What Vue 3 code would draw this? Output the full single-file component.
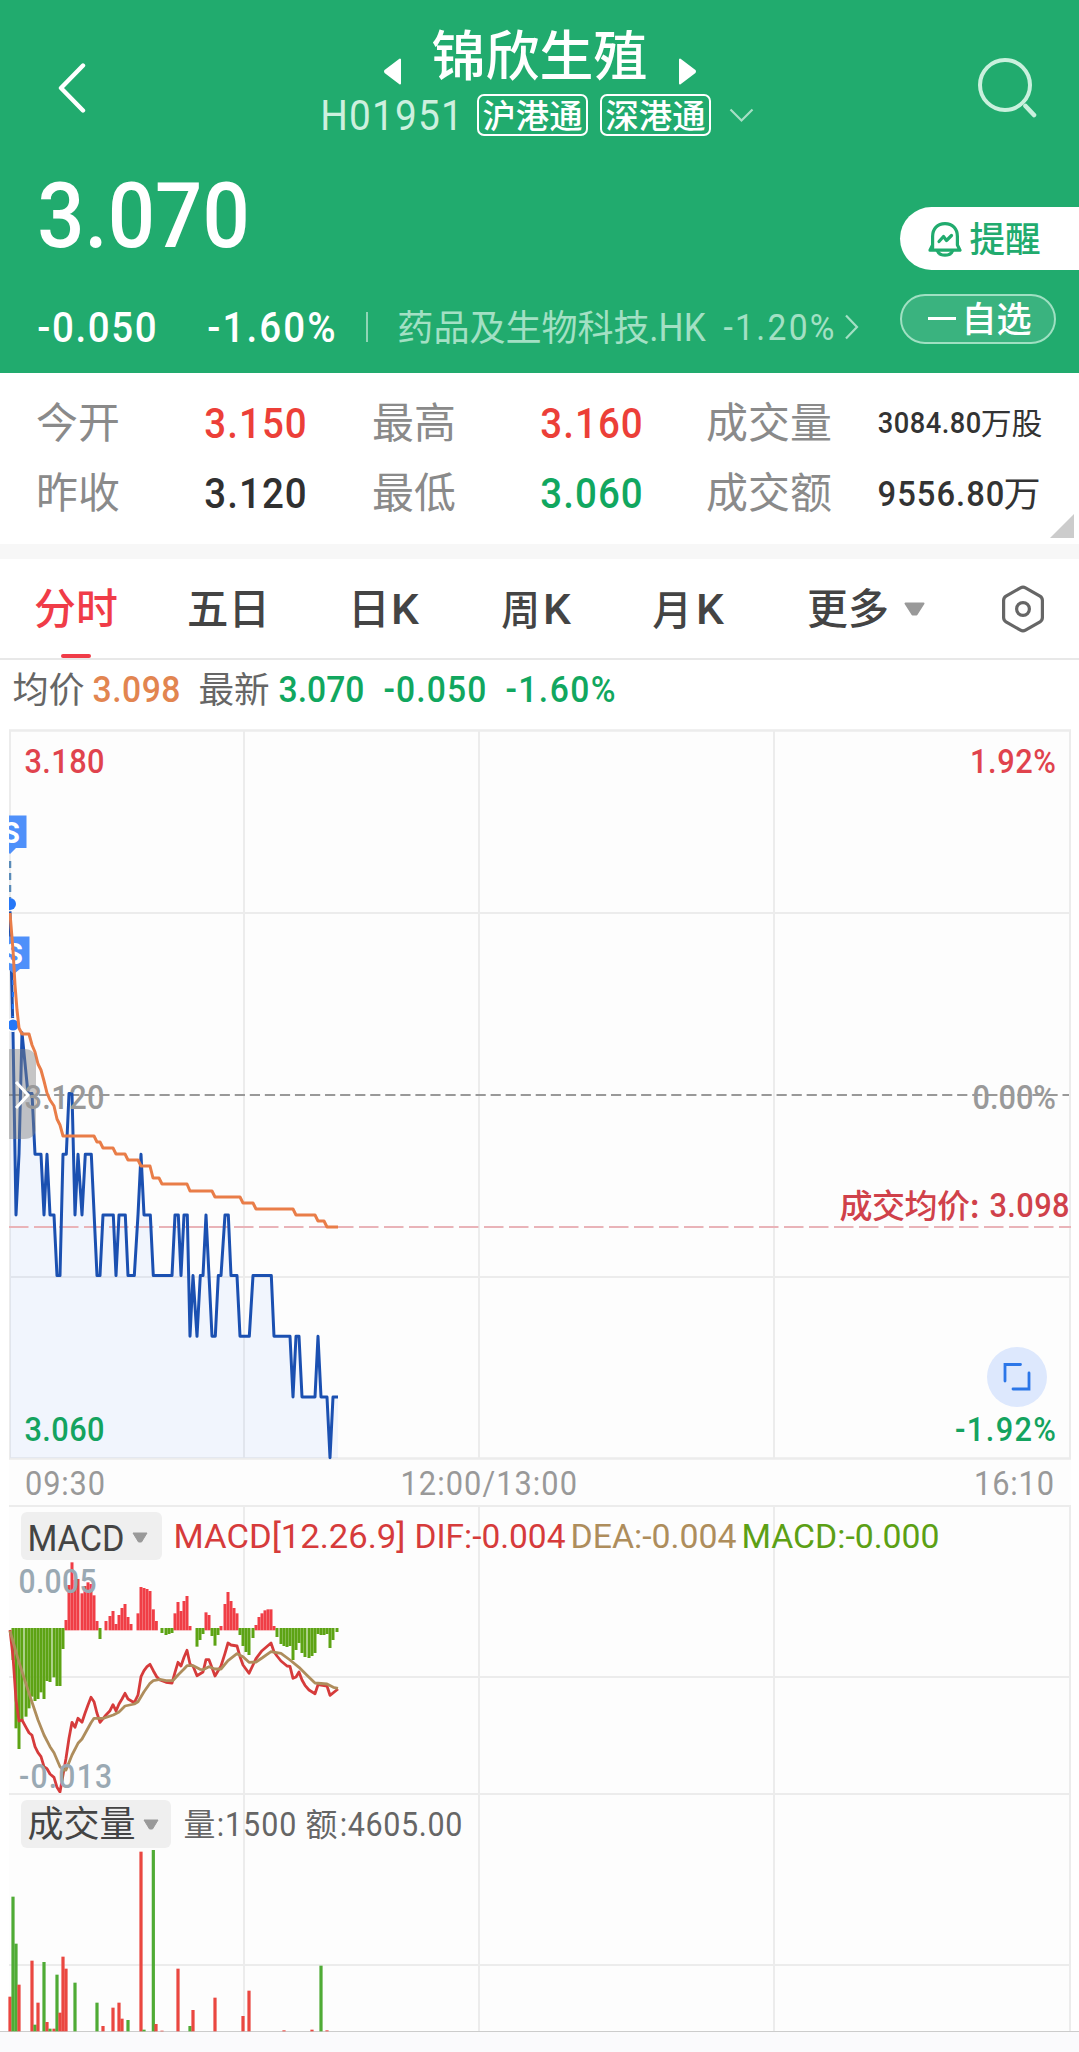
<script setup>
import { h } from 'vue'

const LATIN = 'Roboto, "Noto Sans CJK SC", sans-serif'
const CJK = '"Noto Sans CJK SC", Roboto, sans-serif'
const NARROW = 0.91

// Text set to a fixed width; the box hugs the glyphs so rows can centre it.
// Figures are drawn slightly condensed with the spare width as tracking.
const Fit = (props) => {
  const s = Number(props.s)
  const w = Number(props.w)
  const cjk = /[\u4e00-\u9fff]/.test(props.t)
  const k = /^[H\d.:%+-]+$/.test(props.t) ? NARROW : 1
  const height = cjk ? s * 0.92 : s * 0.711
  const base = cjk ? s * 0.845 : height
  return h('svg', { width: w, height, style: 'overflow:visible;flex:none;display:block' }, [
    h('text', {
      transform: `translate(${-0.045 * s * k} ${base}) scale(${k} 1)`,
      textLength: (w + 0.09 * s * k) / k,
      lengthAdjust: k === 1 ? 'spacingAndGlyphs' : 'spacing',
      fill: 'currentColor',
      'font-size': s,
      'font-weight': props.b || 400,
      'font-family': cjk ? CJK : LATIN
    }, props.t)
  ])
}
Fit.props = ['t', 'w', 's', 'b']

// Same treatment for labels that live inside a chart.
const Num = (props) => h('text', {
  transform: `translate(${props.x} ${props.y}) scale(${NARROW} 1)`,
  textLength: props.w / NARROW,
  lengthAdjust: 'spacing',
  fill: props.c,
  'font-size': props.s || 33.8,
  'font-weight': props.b || 500,
  'font-family': LATIN
}, props.t)
Num.props = ['t', 'x', 'y', 'w', 'c', 's', 'b']

const stats = [
  [
    { l: '今开', v: '3.150', c: 'up' },
    { l: '最高', v: '3.160', c: 'up' },
    { l: '成交量', v: '3084.80', u: '万股' }
  ],
  [
    { l: '昨收', v: '3.120', c: 'flat' },
    { l: '最低', v: '3.060', c: 'down' },
    { l: '成交额', v: '9556.80', u: '万' }
  ]
]

// Samples are [x * 3, value]; x is divided back to page pixels.
const priceRaw = [
  30, 3.15, 39, 3.13, 48, 3.10, 57, 3.11, 66, 3.13, 84, 3.12, 96, 3.12, 105, 3.11, 123, 3.11, 132, 3.10,
  141, 3.11, 150, 3.10, 162, 3.10, 171, 3.09, 180, 3.09, 189, 3.11, 199, 3.11, 207, 3.12, 216, 3.12,
  225, 3.10, 234, 3.11, 246, 3.10, 256, 3.11, 274, 3.11, 291, 3.09, 300, 3.09, 309, 3.10, 340, 3.10,
  348, 3.09, 357, 3.10, 376, 3.10, 384, 3.09, 403, 3.09, 414, 3.10, 423, 3.11, 432, 3.10, 451, 3.10,
  460, 3.09, 516, 3.09, 525, 3.10, 535, 3.10, 543, 3.09, 552, 3.10, 562, 3.10, 570, 3.08, 579, 3.09,
  591, 3.08, 601, 3.09, 609, 3.09, 618, 3.10, 636, 3.08, 646, 3.08, 655, 3.09, 663, 3.09, 675, 3.10,
  685, 3.10, 693, 3.09, 711, 3.09, 720, 3.08, 748, 3.08, 759, 3.09, 814, 3.09, 822, 3.08, 870, 3.08,
  879, 3.07, 888, 3.08, 897, 3.08, 906, 3.07, 945, 3.07, 954, 3.08, 963, 3.07, 981, 3.07, 990, 3.06,
  999, 3.07, 1014, 3.07
]
const pairs = (a) => a.reduce((o, v, i) => (i % 2 ? o[o.length - 1].push(v) : o.push([v]), o), [])
const priceLine = pairs(priceRaw)
  .map(([x, p]) => `${(x / 3).toFixed(1)},${(1093.5 + (3.12 - p) * 6070).toFixed(1)}`)
  .join(' ')
const priceArea = `10,1458 ${priceLine} 338,1458`

const avgLine = '10,913 13,950 15,985 17,1010 19,1028 22,1034 29,1034 32,1045 35,1052 38,1064 41,1070 44,1081 47,1093 50,1100 54,1106 57,1119 60,1125 63,1136 94,1136 97,1142 100,1142 103,1148 113,1148 116,1154 125,1154 128,1160 138,1160 141,1166 150,1166 153,1178 159,1178 162,1184 187,1184 190,1191 212,1191 215,1197 240,1197 243,1203 253,1203 256,1209 293,1209 296,1215 315,1215 318,1221 324,1221 327,1227 338,1227'

const macdUp = pairs([
  198, 360, 207, 255, 216, 187, 225, 240, 234, 237, 246, 280, 255, 258, 264, 247, 273, 252, 282, 286, 291, 363,
  318, 363, 330, 348, 339, 333, 348, 372, 357, 345, 366, 324, 375, 312, 384, 351, 393, 372,
  414, 340, 423, 261, 432, 264, 441, 267, 450, 273, 460, 328, 469, 363,
  525, 340, 534, 306, 543, 333, 552, 303, 561, 288, 570, 378, 618, 337, 627, 345, 663, 378,
  675, 312, 684, 276, 693, 303, 702, 324, 711, 340,
  768, 375, 777, 351, 786, 340, 795, 331, 804, 328, 813, 328, 822, 378
])
const macdDown = pairs([
  39, 480, 48, 685, 57, 747, 66, 660, 78, 650, 87, 625, 96, 590, 105, 603, 114, 597, 123, 577, 132, 597,
  141, 543, 150, 546, 162, 532, 171, 558, 180, 558, 189, 447, 300, 417,
  486, 399, 498, 405, 507, 402, 516, 399, 591, 440, 600, 420, 609, 402, 636, 408, 645, 437, 654, 405,
  720, 405, 729, 438, 738, 456, 747, 465, 759, 414, 831, 411, 843, 432, 852, 438, 861, 441, 870, 438,
  879, 480, 888, 450, 897, 429, 906, 459, 915, 471, 927, 474, 936, 468, 945, 459, 954, 402, 963, 405,
  972, 405, 981, 402, 990, 444, 999, 420, 1011, 396
])
const toLine = (a) => pairs(a).map(([x, y]) => `${(x / 3).toFixed(1)},${(1500 + y / 3).toFixed(1)}`).join(' ')
const dif = toLine([
  30, 390, 39, 470, 48, 600, 57, 663, 66, 660, 78, 682, 87, 698, 96, 706, 105, 740, 114, 758, 123, 770, 132, 800,
  141, 806, 150, 822, 162, 832, 171, 862, 180, 876, 189, 825, 198, 775, 207, 715, 216, 667, 225, 682, 234, 655,
  246, 667, 255, 640, 264, 615, 273, 592, 282, 605, 291, 640, 300, 667, 318, 645, 330, 632, 339, 614, 348, 633,
  357, 612, 366, 597, 375, 580, 384, 597, 403, 608, 414, 585, 423, 530, 432, 512, 441, 500, 450, 493, 460, 512,
  470, 530, 480, 540, 498, 547, 516, 549, 525, 517, 534, 487, 543, 498, 552, 472, 561, 451, 570, 492, 580, 500,
  591, 527, 609, 516, 618, 479, 627, 479, 636, 503, 645, 528, 663, 498, 675, 460, 684, 429, 693, 435, 711, 438,
  720, 470, 729, 495, 747, 520, 759, 495, 768, 476, 786, 452, 813, 429, 822, 455, 831, 468, 843, 483, 861, 498,
  870, 499, 879, 535, 888, 531, 897, 516, 906, 540, 915, 556, 927, 570, 945, 581, 954, 554, 981, 558, 990, 586,
  1014, 567
])
const dea = toLine([
  30, 393, 57, 487, 87, 580, 114, 660, 132, 705, 150, 740, 162, 758, 180, 800, 190, 810, 198, 810, 216, 765,
  234, 730, 246, 717, 273, 668, 282, 655, 309, 655, 340, 645, 357, 636, 375, 618, 403, 612, 414, 605, 432, 575,
  450, 550, 460, 542, 480, 538, 498, 542, 518, 542, 534, 525, 552, 507, 561, 497, 580, 497, 600, 508, 609, 509,
  627, 500, 645, 507, 663, 507, 684, 482, 711, 461, 729, 470, 747, 487, 768, 486, 786, 474, 813, 455, 843, 460,
  870, 480, 897, 502, 920, 525, 945, 549, 981, 552, 1000, 562, 1014, 565
])

const volRaw = 'r30:620 g39:320 g48:461 r57:584 r96:512 g105:704 r114:638 g132:516 r141:696 g150:716 r162:716 g171:554 r180:668 r189:500 r198:536 g225:578 g291:638 r309:708 r339:653 r357:638 r366:686 g384:690 r423:185 g432:719 g460:180 r468:702 r486:722 r534:536 g570:708 r579:660 r645:623 r729:678 r747:602 r852:721 r936:719 g963:527 r981:721'
const vols = volRaw.split(' ').map((s) => {
  const [x, y] = s.slice(1).split(':').map(Number)
  return { x: x / 3 - 1.6, y: 1790 + y / 3, h: (724 - y) / 3, f: s[0] === 'r' ? '#ea4740' : '#4fab35' }
})
</script>

<template>
  <div class="page">
    <header class="head">
      <div class="top">
        <svg class="back" width="28" height="52" viewBox="0 0 28 52"><path d="M25 3.5 3 26 25 48.5" fill="none" stroke="#fff" stroke-width="4.4" stroke-linecap="round" stroke-linejoin="round" /></svg>
        <div class="center">
          <div class="title">
            <svg class="prev" width="18" height="27" viewBox="0 0 18 27"><path d="M16 1.5V25.5L1.5 14.5Q.6 13.5 1.5 12.5Z" fill="#fff" stroke="#fff" stroke-width="2" stroke-linejoin="round" /></svg>
            <Fit class="name" t="锦欣生殖" w="211" s="54" b="500" />
            <svg class="next" width="18" height="27" viewBox="0 0 18 27"><path d="M2 1.5V25.5L16.5 14.5Q17.4 13.5 16.5 12.5Z" fill="#fff" stroke="#fff" stroke-width="2" stroke-linejoin="round" /></svg>
          </div>
          <div class="codes">
            <Fit class="code" t="H01951" w="139" s="42.6" />
            <span class="tag first"><Fit t="沪港通" w="97" s="33" b="500" /></span>
            <span class="tag"><Fit t="深港通" w="97" s="33" b="500" /></span>
            <svg class="drop" width="25" height="15" viewBox="0 0 25 15"><path d="M1.5 1.5 12.5 12.5 23.5 1.5" fill="none" stroke="#a6dfc5" stroke-width="2.2" /></svg>
          </div>
        </div>
        <svg class="search" width="60" height="62" viewBox="0 0 60 62"><g fill="none" stroke="#c9f0dd" stroke-width="4"><circle cx="27" cy="29" r="25" /><path d="M47.5 50 56 59" stroke-linecap="round" stroke-width="4.6" /></g></svg>
      </div>
      <div class="body">
        <div class="left">
          <Fit t="3.070" w="205" s="91.5" b="500" />
          <div class="sub">
            <Fit t="-0.050" w="116" s="42.3" b="500" />
            <Fit class="pct" t="-1.60%" w="125" s="42.3" b="500" />
            <i class="bar"></i>
            <span class="sector">
              <Fit t="药品及生物科技" w="249" s="36.2" />
              <Fit t=".HK" w="53" s="38" />
              <Fit class="spct" t="-1.20%" w="108" s="37" />
              <svg width="14" height="26" viewBox="0 0 14 26"><path d="M1 1.5 12 13 1 24.5" fill="none" stroke="currentColor" stroke-width="2.2" /></svg>
            </span>
          </div>
        </div>
        <div class="right">
          <div class="remind">
            <svg width="34" height="36" viewBox="0 0 34 36"><g fill="none" stroke="#21ab6e" stroke-width="3.2" stroke-linejoin="round" stroke-linecap="round"><path d="M4.6 27V15.5C4.6 7.500 9.500 2.600 17 2.600S29.400 7.500 29.400 15.500V24L32 29.200H2L4.600 24" /><path d="M9.500 30C10.500 33 13 34.200 17 34.200S23.500 33 24.500 30" /><path d="M11 20.500 15.500 15.500 18.500 19.500 23.500 14.500" /></g></svg>
            <Fit t="提醒" w="68" s="35.500" b="500" />
          </div>
          <div class="own"><i></i><Fit t="自选" w="67" s="35" b="500" /></div>
        </div>
      </div>
    </header>

    <section class="stats">
      <div v-for="(row, r) in stats" :key="r" class="srow">
        <div v-for="(c, i) in row" :key="c.l" class="cell" :class="'c' + i">
          <Fit class="lab" :t="c.l" :w="i === 2 ? 122 : 80" s="42" />
          <Fit v-if="i < 2" :class="c.c" :t="c.v" w="99" s="42.3" b="500" />
          <span v-else class="vol">
            <Fit :t="c.v" :w="r ? 124 : 101" :s="r ? 36 : 30" b="500" />
            <Fit :t="c.u" :w="r ? 34 : 59" :s="r ? 35 : 30" />
          </span>
        </div>
      </div>
      <i class="corner"></i>
    </section>

    <nav class="tabs">
      <div class="tab on"><Fit t="分时" w="80" s="42" b="500" /></div>
      <div class="tab"><Fit t="五日" w="79" s="42" b="500" /></div>
      <div class="tab"><Fit t="日" w="38" s="42" b="500" /><Fit t="K" w="24" s="43" b="500" /></div>
      <div class="tab"><Fit t="周" w="35" s="41" b="500" /><Fit t="K" w="24" s="43" b="500" /></div>
      <div class="tab"><Fit t="月" w="36" s="41" b="500" /><Fit t="K" w="24" s="43" b="500" /></div>
      <div class="tab"><Fit t="更多" w="78" s="42" b="500" />
        <svg class="more" width="21" height="14" viewBox="0 0 21 14"><path d="M1.500 1.500H19.500L12.500 12.500H8.500Z" fill="#999" stroke="#999" stroke-width="2" stroke-linejoin="round" /></svg>
      </div>
      <svg class="gear" width="44" height="48" viewBox="0 0 44 48"><g fill="none" stroke="#666" stroke-width="3.200"><path d="M19.500 2.800Q22 1.400 24.500 2.800L39 11.200Q41.400 12.700 41.400 15.500V32.500Q41.400 35.300 39 36.800L24.500 45.200Q22 46.600 19.500 45.200L5 36.800Q2.600 35.300 2.600 32.500V15.500Q2.600 12.700 5 11.200Z" /><circle cx="22" cy="24" r="6.400" /></g></svg>
    </nav>

    <div class="info">
      <Fit t="均价" w="69" s="36" /><Fit class="avg" t="3.098" w="85" s="37" b="500" />
      <Fit class="new" t="最新" w="68" s="36" /><Fit class="down n1" t="3.070" w="83" s="37" b="500" />
      <Fit class="down n2" t="-0.050" w="100" s="37" b="500" /><Fit class="down n2" t="-1.60%" w="107" s="37" b="500" />
    </div>

    <svg class="chart" width="1079" height="776" viewBox="0 729 1079 776">
      <defs><clipPath id="plot"><rect x="9" y="729" width="1062" height="732" /></clipPath></defs>
      <rect x="9" y="729" width="1062" height="776" fill="#fdfdfd" />
      <g stroke="#ececec" stroke-width="2" fill="none">
        <path d="M9 730.500H1071M9 1458.500H1071" stroke-width="2.600" />
        <path d="M10 730V1459M244 730V1459M479 730V1459M774 730V1459M1070 730V1459M9 913H1071M9 1277H1071" />
      </g>
      <g clip-path="url(#plot)">
        <polygon :points="priceArea" fill="#2f74ff" fill-opacity=".06" />
        <path d="M9 1095H1069" stroke="#999" stroke-width="2" stroke-dasharray="10.200 4.850" />
        <path d="M9 1227H1071" stroke="#e9b3b8" stroke-width="2" stroke-dasharray="19.500 5.500" />
        <polyline :points="priceLine" fill="none" stroke="#1b50b1" stroke-width="3" stroke-linejoin="round" />
        <g class="flag">
          <path d="M-6 815.500H26.500V848H16L10 854L4 848H-6Z" fill="#4f90fa" />
          <text x="11" y="843" text-anchor="middle">S</text>
          <path d="M10 861V898" stroke="#5a8bb8" stroke-width="2.500" stroke-dasharray="7 5" />
          <circle cx="10" cy="904" r="6" fill="#2677f7" />
          <path d="M-3 936.500H29.500V969H20L14 974L8 969H-3Z" fill="#4f90fa" />
          <text x="14" y="964" text-anchor="middle">S</text>
          <path d="M13 980V1017" stroke="#2677f7" stroke-width="2" stroke-dasharray="5 7" />
          <circle cx="13" cy="1025" r="7" fill="#fff" /><circle cx="13" cy="1025" r="5.500" fill="#2677f7" />
        </g>
        <polyline :points="avgLine" fill="none" stroke="#e97d48" stroke-width="3" stroke-linejoin="round" />
        <path d="M9 1049H24Q36 1049 36 1061V1127Q36 1139 24 1139H9Z" fill="#808080" fill-opacity=".45" />
      </g>
      <Num t="3.180" x="24.500" y="773" w="80" c="#e0434d" />
      <Num t="1.92%" x="970" y="773" w="86" c="#e0434d" />
      <Num t="3.120" x="24.500" y="1109" w="80" c="#999" />
      <Num t="0.00%" x="972.500" y="1109" w="83.500" c="#999" />
      <Num t="3.060" x="24.500" y="1441" w="80" c="#14a35f" />
      <Num t="-1.92%" x="955" y="1441" w="101" c="#14a35f" />
      <text x="839.500" y="1218" textLength="140" fill="#d0414a" class="cn">成交均价:</text>
      <Num t="3.098" x="989.500" y="1217" w="80" c="#d0414a" />
      <Num t="09:30" x="25" y="1494.500" w="80" c="#999" b="450" />
      <Num t="12:00/13:00" x="400.500" y="1494.500" w="176.500" c="#999" b="450" />
      <Num t="16:10" x="974" y="1494.500" w="80" c="#999" b="450" />
      <path d="M16 1082 28 1095 16 1108" fill="none" stroke="#fff" stroke-width="3" />
      <circle cx="1017" cy="1377" r="30" fill="#dde8fd" />
      <path d="M1020.500 1364.500H1005V1381M1013 1389H1029V1373" fill="none" stroke="#2b76e8" stroke-width="2.800" stroke-linecap="round" />
    </svg>

    <section class="panel macd">
      <svg width="1079" height="289" viewBox="0 1505 1079 289">
        <rect x="9" y="1505" width="1062" height="289" fill="#fdfdfd" />
        <path d="M9 1506H1071M9 1677H1071M244 1506V1794M479 1506V1794M774 1506V1794M1070 1506V1794" stroke="#ececec" stroke-width="2" />
        <rect v-for="b in macdUp" :key="'u' + b[0]" :x="b[0] / 3 - 1.500" :y="1500 + b[1] / 3" width="3" :height="(391 - b[1]) / 3" fill="#f03e46" />
        <rect v-for="b in macdDown" :key="'d' + b[0]" :x="b[0] / 3 - 1.500" y="1628" width="3" :height="(b[1] - 384) / 3" fill="#5da314" />
        <g fill="none" stroke-width="2.800" stroke-linejoin="round">
          <polyline :points="dif" stroke="#d63b3b" />
          <polyline :points="dea" stroke="#ae8d5c" />
        </g>
        <Num t="0.005" x="18.500" y="1593" w="78" c="#9aa9b3" s="33" />
        <Num t="-0.013" x="19" y="1788" w="93" c="#9aa9b3" s="33" />
      </svg>
      <div class="legend">
        <span class="pill p1"><Fit t="MACD" w="94" s="36" />
          <svg width="16" height="11" viewBox="0 0 16 11"><path d="M1 1H15L9.500 10H6.500Z" fill="#999" stroke="#999" stroke-linejoin="round" /></svg></span>
        <Fit class="m1" t="MACD[12.26.9]" w="229" s="33.500" b="450" />
        <Fit class="m2" t="DIF:-0.004" w="148" s="33.500" b="450" />
        <Fit class="m3" t="DEA:-0.004" w="163" s="33.500" b="450" />
        <Fit class="m4" t="MACD:-0.000" w="195" s="33.500" b="450" />
      </div>
    </section>

    <section class="panel volume">
      <svg width="1079" height="237" viewBox="0 1794 1079 237">
        <rect x="9" y="1794" width="1062" height="237" fill="#fdfdfd" />
        <path d="M9 1794H1071M9 1965H1071M244 1794V2031M479 1794V2031M774 1794V2031M1070 1794V2031" stroke="#ececec" stroke-width="2" />
        <rect v-for="b in vols" :key="b.x" :x="b.x" :y="b.y" width="3.200" :height="b.h" :fill="b.f" />
      </svg>
      <div class="legend">
        <span class="pill p2"><Fit t="成交量" w="105" s="36" />
          <svg width="16" height="11" viewBox="0 0 16 11"><path d="M1 1H15L9.500 10H6.500Z" fill="#999" stroke="#999" stroke-linejoin="round" /></svg></span>
        <span class="qty">
          <Fit t="量" w="29" s="32" /><Fit class="q1" t=":1500" w="77" s="33.500" b="450" />
          <Fit class="q2" t="额" w="29" s="32" /><Fit class="q3" t=":4605.00" w="120" s="33.500" b="450" />
        </span>
      </div>
    </section>
    <footer class="foot"></footer>
  </div>
</template>

<style>
body { margin: 0; background: #fff; }
</style>

<style scoped>
.page { width: 1079px; height: 2052px; overflow: hidden; background: #fff; font-family: Roboto, "Noto Sans CJK SC", sans-serif; }
.page svg { flex: none; }
.head { height: 373px; background: #21ab6e; color: #fff; }
.top { display: flex; align-items: flex-start; height: 136px; }
.back { margin: 62px 0 0 58px; }
.center { width: 433px; margin-left: 236px; padding-top: 30px; }
.title { display: flex; align-items: flex-start; height: 50px; }
.prev { margin: 28px 0 0 62px; }
.name { margin-left: 32px; }
.next { margin: 28px 0 0 33px; }
.codes { display: flex; align-items: center; height: 42px; margin-top: 14px; }
.code { color: #cdf0de; }
.tag { display: flex; align-items: center; justify-content: center; box-sizing: border-box; width: 111px; height: 42px; border: 2px solid #fff; border-radius: 7px; margin-left: 12px; }
.tag.first { margin-left: 16px; }
.drop { margin-left: 18px; }
.search { margin: 56px 0 0 223px; }
.body { display: flex; }
.left { width: 859px; padding: 46px 0 0 41px; }
.sub { display: flex; align-items: center; height: 36px; margin-top: 62px; margin-left: -2px; }
.pct { margin-left: 54px; }
.bar { width: 2px; height: 30px; margin: 0 31px 0 32px; background: #90d5b6; }
.sector { display: flex; align-items: center; gap: 3px; color: #a3e0c4; }
.spct { margin: 0 9px 0 18px; }
.right { padding-top: 71px; width: 179px; }
.remind { display: flex; align-items: center; gap: 9px; box-sizing: border-box; height: 63px; padding-left: 28px; border-radius: 32px 0 0 32px; background: #fff; color: #21ab6e; }
.own { display: flex; align-items: center; gap: 7px; box-sizing: border-box; width: 156px; height: 50px; margin-top: 24px; padding: 0 0 2px 26px; border: 2px solid #9fe0c2; border-radius: 25px; background: #3ab37f; }
.own i { width: 28px; height: 3px; background: #fff; }
.stats { position: relative; box-sizing: border-box; height: 171px; padding: 15px 0 0 38px; }
.srow { display: flex; height: 70px; align-items: center; }
.cell { display: flex; align-items: center; }
.lab { margin-top: -2px; }
.c0, .c1 { justify-content: space-between; width: 267px; margin-right: 69px; }
.c1 { margin-right: 67px; }
.c2 { gap: 49px; }
.lab { color: #8a8a8a; }
.vol { display: flex; align-items: center; gap: 2px; color: #333; }
.up { color: #ec3f38; }
.flat { color: #303030; }
.down { color: #11a75f; }
.corner { position: absolute; right: 5px; bottom: 6px; width: 24px; height: 24px; background: #ccc; clip-path: polygon(100% 0, 100% 100%, 0 100%); }
.tabs { display: flex; align-items: center; box-sizing: border-box; height: 116px; padding-left: 36px; border-top: 15px solid #f7f7f7; border-bottom: 2px solid #e8e8e8; color: #444; }
.tab { display: flex; align-items: center; margin-right: 86px; }
.tab:nth-child(1) { margin-right: 73px; }
.tab:nth-child(2) { margin-right: 82px; }
.tab:nth-child(3) { gap: 5px; }
.tab:nth-child(4) { gap: 7px; margin-right: 85px; }
.tab:nth-child(5) { gap: 8px; margin-right: 87px; }
.tab:nth-child(6) { gap: 17px; margin-right: 76px; }
.tab.on { position: relative; color: #f03c48; }
.tab.on::after { content: ""; position: absolute; left: 25px; bottom: -30px; width: 30px; height: 4px; border-radius: 2px; background: #f03c48; }
.info { display: flex; align-items: center; height: 59px; padding: 0 0 10px 14px; box-sizing: content-box; color: #666; }
.avg { margin-left: 11px; color: #e28550; }
.new { margin-left: 21px; }
.n1 { margin-left: 12px; }
.n2 { margin-left: 22px; }
.chart { display: block; }
.cn { font-family: "Noto Sans CJK SC", sans-serif; font-size: 33px; font-weight: 500; }
.flag text { font: bold 29px Roboto, sans-serif; fill: #fff; }
.panel { display: grid; }
.panel > svg, .legend { grid-area: 1 / 1; }
.panel > svg { display: block; overflow: visible; }
.legend { display: flex; align-items: center; align-self: start; height: 48px; padding: 7px 0 0 21px; }
.volume .legend { padding-top: 6px; }
.pill { display: flex; align-items: center; box-sizing: border-box; height: 48px; padding-left: 8px; border-radius: 6px; background: #efefef; color: #444; gap: 9px; }
.p1 { width: 141px; margin-right: 13px; padding-top: 3px; }
.p2 { width: 150px; margin-right: 14px; }
.m1 { color: #d63b3b; }
.m2 { margin-left: 12px; color: #d63b3b; }
.m3 { margin-left: 8px; color: #ae8d5c; }
.m4 { margin-left: 8px; color: #5ca015; }
.qty { display: flex; align-items: center; color: #666; }
.q1 { margin-left: 4px; }
.q2 { margin-left: 12px; }
.q3 { margin-left: 5px; }
.foot { height: 21px; box-sizing: border-box; border-top: 1px solid #ccc; background: #fafafc; }
</style>
